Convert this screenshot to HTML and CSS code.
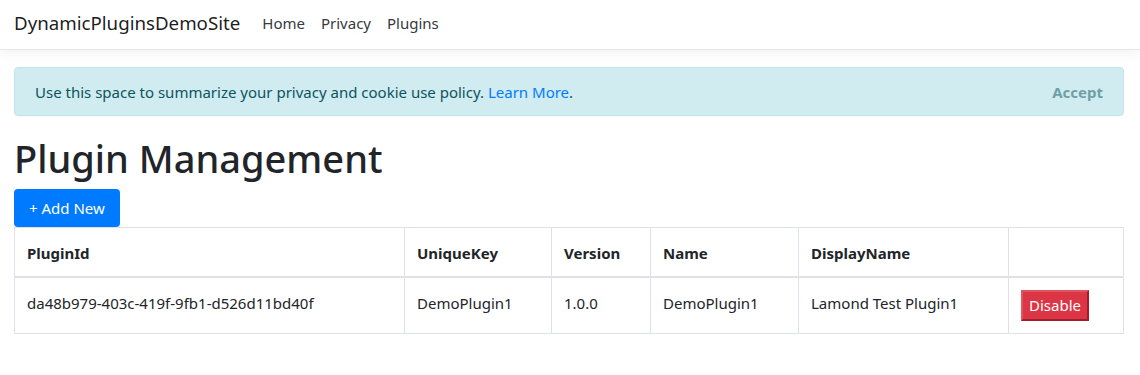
FILE: index.html
```html
<!DOCTYPE html>
<html>
<head>
<meta charset="utf-8">
<title>Plugin Management</title>
<link rel="stylesheet" href="styles.css">
</head>
<body>
<header class="navbar">
  <a class="brand" href="#">DynamicPluginsDemoSite</a>
  <nav class="nav-links">
    <a href="#">Home</a>
    <a href="#">Privacy</a>
    <a href="#">Plugins</a>
  </nav>
</header>
<main class="page">
  <div class="alert">
    <span>Use this space to summarize your privacy and cookie use policy. <a href="#">Learn More</a>.</span>
    <button class="accept">Accept</button>
  </div>
  <h1>Plugin Management</h1>
  <a class="btn-primary" href="#">+ Add New</a>
  <table class="grid">
    <colgroup>
      <col class="c1"><col class="c2"><col class="c3"><col class="c4"><col class="c5"><col class="c6">
    </colgroup>
    <thead>
      <tr><th>PluginId</th><th>UniqueKey</th><th>Version</th><th>Name</th><th>DisplayName</th><th></th></tr>
    </thead>
    <tbody>
      <tr>
        <td>da48b979-403c-419f-9fb1-d526d11bd40f</td>
        <td>DemoPlugin1</td>
        <td>1.0.0</td>
        <td>DemoPlugin1</td>
        <td>Lamond Test Plugin1</td>
        <td><button class="btn-disable">Disable</button></td>
      </tr>
    </tbody>
  </table>
</main>
</body>
</html>
```
FILE: styles.css
```css
html, body { margin: 0; padding: 0; }
body {
  font-family: "Noto Sans", "Open Sans", sans-serif;
  font-size: 15px;
  color: #212529;
  background: #fff;
}
a { text-decoration: none; }
.navbar {
  height: 49px;
  border-bottom: 1px solid #e3e6ea;
  box-shadow: 0 4px 12px rgba(0,0,0,.05);
  display: flex;
  align-items: center;
  padding: 0 14px;
  box-sizing: content-box;
}
.brand {
  font-size: 18.7px;
  color: rgba(0,0,0,.9);
  margin-right: 22px;
  margin-top: -4px;
}
.nav-links { display: flex; gap: 16px; margin-top: -4px; }
.nav-links a { color: #343a40; font-size: 15px; }
.page { padding: 17px 16px 0 14px; }
.alert {
  height: 49px;
  box-sizing: border-box;
  background: #d1ecf1;
  border: 1px solid #bee5eb;
  border-radius: 4px;
  color: #0c5460;
  display: flex;
  align-items: center;
  justify-content: space-between;
  padding: 0 20px 0 20px;
}
.alert a { color: #007bff; }
.accept {
  background: none; border: none; padding: 0;
  font: inherit; font-weight: 700; color: #0c5460; opacity: .5;
}
h1 {
  font-size: 38px;
  font-weight: 500;
  margin: 20px 0 0 0;
  line-height: 1.2;
  height: 53px;
}
.btn-primary {
  display: inline-flex;
  align-items: center;
  height: 38px;
  box-sizing: border-box;
  padding: 0 15px;
  background: #007bff;
  color: #fff;
  border-radius: 4px;
  font-size: 15px;
}
.grid {
  width: 100%;
  border-collapse: collapse;
  table-layout: fixed;
  margin-top: 0;
}
.c1 { width: 390px; } .c2 { width: 147px; } .c3 { width: 99px; }
.c4 { width: 148px; } .c5 { width: 210px; }
.grid th, .grid td {
  border: 1px solid #dee2e6;
  padding: 12px;
  text-align: left;
  vertical-align: top;
}
.grid th { font-weight: 700; height: 23px; padding-top: 15px; padding-bottom: 10px; border-bottom-width: 2px; }
.grid td { height: 26px; padding-top: 15px; }
.grid td:last-child { padding-top: 12px; }
.btn-disable {
  background: #dc3545;
  color: #fff;
  font: inherit;
  font-size: 15px;
  border: 2px solid;
  border-color: #e0545f #a41d2a #a41d2a #e0545f;
  padding: 3px 6px 4px;
  margin-top: 0;
}
```
